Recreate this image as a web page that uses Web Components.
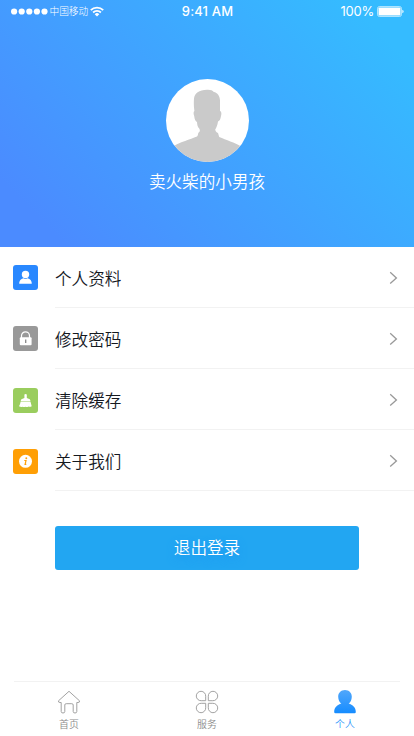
<!DOCTYPE html>
<html lang="zh-CN">
<head>
<meta charset="utf-8">
<title>个人</title>
<style>
html,body{margin:0;padding:0}
body{background:#fff;font-family:Inter,"Noto Sans CJK SC",sans-serif;width:414px;height:736px;overflow:hidden}
</style>
</head>
<body>
<profile-page></profile-page>
<script>
function define(name, html) {
  const t = document.createElement('template');
  t.innerHTML = html;
  customElements.define(name, class extends HTMLElement {
    constructor() {
      super();
      this.attachShadow({mode: 'open'}).appendChild(t.content.cloneNode(true));
    }
  });
}

define('status-bar', `
<style>
:host{display:grid;grid-template-columns:1fr auto 1fr;align-items:center;height:23px;padding:0 10px 0 11px;color:#fff}
.l,.r{display:flex;align-items:center}
.r{justify-content:flex-end;font-size:13px;gap:3px}
.dots{display:block;margin-right:1.500px}
.c{font-size:9.700px;line-height:22px;font-weight:300}
.t{font-size:13px;line-height:23px;font-weight:500;letter-spacing:.15px}
.p{font-weight:400;letter-spacing:-.25px;line-height:23px}
.t,.p{margin-top:-1px}
svg{display:block}
</style>
<div class="l"><svg class="dots" width="37" height="7" viewBox="0 0 37 7"><g fill="#fff"><circle cx="3.100" cy="3.500" r="3.100"/><circle cx="10.700" cy="3.500" r="3.100"/><circle cx="18.300" cy="3.500" r="3.100"/><circle cx="25.900" cy="3.500" r="3.100"/><circle cx="33.500" cy="3.500" r="3.100"/></g></svg><span class="c">中国移动</span>
<svg width="14" height="11" viewBox="0 0 14 11" style="margin-left:1.500px"><g fill="none" stroke="#fff" stroke-width="1.800"><path d="M.8 4.100a8.800 8.800 0 0 1 12.400 0"/><path d="M3.100 6.500a5.500 5.500 0 0 1 7.800 0"/></g><path d="M7 10.600 4.700 8.300a3.200 3.200 0 0 1 4.600 0Z" fill="#fff"/></svg></div>
<span class="t">9:41 AM</span>
<div class="r"><span class="p">100%</span>
<svg width="27" height="11" viewBox="0 0 27 11"><rect x=".5" y=".5" width="24" height="10" rx="2" fill="none" stroke="#fff" stroke-opacity=".6"/><rect x="1.500" y="1.500" width="22" height="8" rx=".8" fill="#fff"/><path d="M25.400 3.800c1.600.5 1.600 2.900 0 3.400Z" fill="#fff"/></svg></div>`);

define('user-avatar', `
<style>:host{display:block;width:83px;height:83px;border-radius:50%;background:#fff;overflow:hidden}svg{display:block}</style>
<svg width="83" height="83" viewBox="0 0 83 83"><path fill="#cacaca" d="M28 19.500C28.500 14.500 33 10.800 41 10.700C44.500 10.500 46.500 11.300 47.800 13C51.500 13.500 53.800 17 54 21.500L54 32C55.500 32.500 55.700 34.500 55 37C54.500 40 53.800 42 52 42.500C51.500 46 50.500 48.500 49.200 50.500C49.500 52.500 50.500 53.500 52 54.100L53.200 58C60 61 69 63.500 75 67.500L84 84H0L8 67C14 63 24 60.500 31 57.500C32 56.500 32 55 32.300 54C34 52.500 34.300 51.500 33.200 49.500C31.500 48 31.200 46 31 43C29.500 42.500 28.500 40 28.200 37C27.300 34.500 27.400 32.500 28.400 32C27.700 27.500 27.700 23.500 28 19.500Z"/></svg>`);

define('profile-header', `
<style>
:host{display:block;height:246.600px;background:linear-gradient(45deg,#4b8bff 10%,#35bbff 90%);color:#fff}
.body{display:flex;flex-direction:column;align-items:center;padding-top:56.400px}
.name{font-size:16.600px;line-height:24px;margin-top:7.700px;font-weight:350}
</style>
<status-bar></status-bar>
<div class="body"><user-avatar></user-avatar><div class="name"><slot></slot></div></div>`);

define('menu-row', `
<style>
:host{display:flex;align-items:stretch;height:61.200px;padding-left:13px;color:#15191f}
.icon{display:flex;align-items:center;width:42px;flex:none;padding-top:1px}
.icon ::slotted(svg){display:block}
.main{flex:1;display:flex;align-items:center;justify-content:space-between;border-bottom:1px solid #f2f2f2;padding:2px 16px 0 0;font-size:16.600px;font-weight:350;box-sizing:border-box}
</style>
<div class="icon"><slot name="icon"></slot></div>
<div class="main"><span><slot></slot></span>
<svg width="9" height="14" viewBox="0 0 9 14"><path d="M1.200 1.300 7.400 6.900 1.200 12.500" fill="none" stroke="#999" stroke-width="1.300"/></svg></div>`);

define('primary-button', `
<style>
:host{display:block;margin:34.500px 55px 0}
button{display:block;width:304px;height:44px;border:0;border-radius:3px;background:#22a6f2;color:#fff;font:350 16.600px/44px Inter,"Noto Sans CJK SC",sans-serif;padding:0;text-shadow:0 4px 8px #1b98f0}
</style><button><slot></slot></button>`);

define('tab-item', `
<style>
:host{display:flex;flex-direction:column;align-items:center;color:#8c8c8c;font-size:9.900px;line-height:14px;flex:1;padding-top:8.500px;gap:3px}
:host([active]){color:#2894fb}
span{font-weight:350}
::slotted(svg){display:block}
</style><slot name="icon"></slot><span><slot></slot></span>`);

define('tab-bar', `
<style>
:host{display:flex;height:55px;box-sizing:border-box;background:linear-gradient(#f2f2f2,#f2f2f2) center top/386px 1px no-repeat}
</style><slot></slot>`);

define('profile-page', `
<style>
:host{display:flex;flex-direction:column;width:414px;height:736px;background:#fff}
tab-bar{margin-top:auto}
svg{flex:none}
</style>
<profile-header>卖火柴的小男孩</profile-header>
<menu-row><svg slot="icon" width="25" height="25" viewBox="0 0 25 25"><rect width="25" height="25" rx="3" fill="#2988ff"/><circle cx="12.500" cy="9.400" r="3.700" fill="#fff"/><path d="M6.200 18.700C6.200 15.200 8.500 13.600 10.600 13.200Q12.500 14.300 14.400 13.200C16.500 13.600 18.800 15.200 18.800 18.700Z" fill="#fff"/></svg>个人资料</menu-row>
<menu-row><svg slot="icon" width="25" height="25" viewBox="0 0 25 25"><rect width="25" height="25" rx="3" fill="#999"/><path d="M8.500 12V9.800a4 4 0 0 1 8 0V12" fill="none" stroke="#fff" stroke-width="1.200"/><rect x="6.800" y="11.200" width="11.800" height="8" rx="1" fill="#fff"/><path d="M12.700 13.500v3.500" stroke="#888" stroke-width="1.300"/></svg>修改密码</menu-row>
<menu-row><svg slot="icon" width="25" height="25" viewBox="0 0 25 25"><rect width="25" height="25" rx="3" fill="#9acd5e"/><path fill="#fff" d="M11.400 6.500Q12.600 5.300 13.800 6.500V10.100L16.800 11.200Q17.500 12 17.400 13.200H7.700Q7.700 12 8.400 11.200L11.400 10.100ZM7.600 13.700H17.500L18.700 18.300Q17 19.300 15.500 18.500Q14 19.500 12.500 18.700Q11 19.500 9.500 18.700Q8 19.300 6 18.300Q7.200 16.500 7.600 13.700Z"/></svg>清除缓存</menu-row>
<menu-row><svg slot="icon" width="25" height="25" viewBox="0 0 25 25"><rect width="25" height="25" rx="3" fill="#ff9f05"/><circle cx="12.500" cy="12.300" r="6.500" fill="#fff"/><circle cx="13.300" cy="9.300" r=".95" fill="#ff9f05"/><path d="M11.300 11.500h1.700l-.9 3.900h1.200" fill="none" stroke="#ff9f05" stroke-width="1.200"/></svg>关于我们</menu-row>
<primary-button>退出登录</primary-button>
<tab-bar>
<tab-item><svg slot="icon" width="24" height="24" viewBox="0 0 24 24"><path d="M12 1.300 1.500 10.800Q1 12.500 3 12.500H4.200V21.500Q4.200 23 6 23T7.800 21.500V15Q7.800 13.700 9.200 13.700H14.800Q16.200 13.700 16.200 15V21.500Q16.200 23 18 23T19.800 21.500V12.500H21Q23 12.500 22.500 10.800Z" fill="none" stroke="#a2a2a2" stroke-width="1" stroke-linejoin="round"/></svg>首页</tab-item>
<tab-item><svg slot="icon" width="24" height="24" viewBox="0 0 24 24"><g fill="none" stroke="#a2a2a2"><path d="M10.700 10.700H6.200A4.700 4.700 0 1 1 10.700 6.200Z"/><path d="M13.300 10.700H17.800A4.700 4.700 0 1 0 13.300 6.200Z"/><path d="M10.700 13.300H6.200A4.700 4.700 0 1 0 10.700 17.800Z"/><path d="M13.300 13.300H17.800A4.700 4.700 0 1 1 13.300 17.800Z"/></g></svg>服务</tab-item>
<tab-item active><svg slot="icon" width="24" height="24" viewBox="0 0 24 24"><defs><linearGradient id="g" x1="0" y1="0" x2="0" y2="1"><stop stop-color="#51a7fb"/><stop offset="1" stop-color="#168cff"/></linearGradient></defs><path fill="url(#g)" d="M12 0C16 0 18.900 2.900 18.800 6.800C18.700 10 17.400 12.600 15.700 13.600C19.500 14.700 22.800 17.500 22.800 22Q22.800 23.200 21.500 23.200H2.500Q1.200 23.200 1.200 22C1.200 17.500 4.500 14.700 8.300 13.600C6.600 12.600 5.300 10 5.200 6.800C5.100 2.900 8 0 12 0Z"/></svg>个人</tab-item>
</tab-bar>`);
</script>
</body>
</html>
